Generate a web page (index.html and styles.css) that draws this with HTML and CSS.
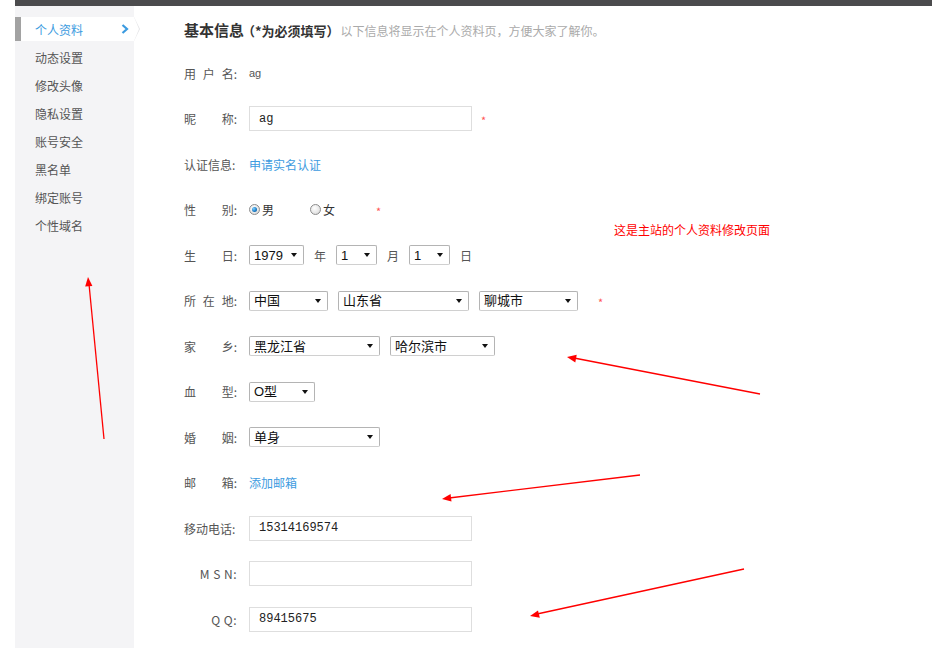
FILE: index.html
```html
<!DOCTYPE html>
<html lang="zh-CN">
<head>
<meta charset="utf-8">
<title>个人资料</title>
<link rel="stylesheet" href="styles.css">
</head>
<body>
<div class="page">
  <div class="topbar"></div>
  <div class="layout">
    <nav class="side">
      <a class="item active">个人资料<svg class="chev" width="8" height="10" viewBox="0 0 8 10"><polyline points="1.5,1 6,5 1.5,9" fill="none" stroke="#3b9be0" stroke-width="2.2"/></svg></a>
      <a class="item">动态设置</a>
      <a class="item">修改头像</a>
      <a class="item">隐私设置</a>
      <a class="item">账号安全</a>
      <a class="item">黑名单</a>
      <a class="item">绑定账号</a>
      <a class="item">个性域名</a>
    </nav>
    <main class="main">
      <h2 class="title">基本信息<span class="req">（*为必须填写）</span><span class="tip">以下信息将显示在个人资料页，方便大家了解你。</span></h2>

      <div class="row"><label class="lbl"><span>用</span><span>户</span><span class="c">名:</span></label><span class="uname">ag</span></div>

      <div class="row"><label class="lbl"><span>昵</span><span class="c">称:</span></label><input class="txt" type="text" value="ag"><span class="star">*</span></div>

      <div class="row"><label class="lbl"><span class="c">认证信息:</span></label><a class="link">申请实名认证</a></div>

      <div class="row"><label class="lbl"><span>性</span><span class="c">别:</span></label>
        <span class="radio on"></span><span class="rtext">男</span>
        <span class="radio female"></span><span class="rtext">女</span>
        <span class="star star-sex">*</span>
      </div>

      <div class="row"><label class="lbl"><span>生</span><span class="c">日:</span></label>
        <span class="sel w-year"><select><option>1979</option></select></span><span class="unit">年</span>
        <span class="sel w-md"><select><option>1</option></select></span><span class="unit">月</span>
        <span class="sel w-md"><select><option>1</option></select></span><span class="unit">日</span>
      </div>

      <div class="row"><label class="lbl"><span>所</span><span>在</span><span class="c">地:</span></label>
        <span class="sel w-country"><select><option>中国</option></select></span>
        <span class="sel w-prov gap"><select><option>山东省</option></select></span>
        <span class="sel w-city gap"><select><option>聊城市</option></select></span>
        <span class="star star-loc">*</span>
      </div>

      <div class="row"><label class="lbl"><span>家</span><span class="c">乡:</span></label>
        <span class="sel w-prov"><select><option>黑龙江省</option></select></span>
        <span class="sel w-hcity gap"><select><option>哈尔滨市</option></select></span>
      </div>

      <div class="row"><label class="lbl"><span>血</span><span class="c">型:</span></label>
        <span class="sel w-blood"><select><option>O型</option></select></span>
      </div>

      <div class="row"><label class="lbl"><span>婚</span><span class="c">姻:</span></label>
        <span class="sel w-prov"><select><option>单身</option></select></span>
      </div>

      <div class="row"><label class="lbl"><span>邮</span><span class="c">箱:</span></label><a class="link">添加邮箱</a></div>

      <div class="row"><label class="lbl"><span class="c">移动电话:</span></label><input class="txt" type="text" value="15314169574"></div>

      <div class="row"><label class="lbl lbl-r"><span class="c">M S N:</span></label><input class="txt" type="text" value=""></div>

      <div class="row"><label class="lbl lbl-r"><span class="c">Q Q:</span></label><input class="txt" type="text" value="89415675"></div>
    </main>
  </div>

  <span class="note">这是主站的个人资料修改页面</span>

  <svg class="arrows" width="932" height="648" viewBox="0 0 932 648">
    <g stroke="#ff0000" stroke-width="1.3" fill="none">
      <line x1="104" y1="439" x2="89" y2="284"/>
      <line x1="760" y1="394" x2="574" y2="358"/>
      <line x1="640" y1="475" x2="449" y2="498"/>
      <line x1="744" y1="569" x2="537" y2="614"/>
    </g>
    <g fill="#ff0000">
      <polygon points="88,277 92.4,286 85.2,286.6"/>
      <polygon points="567,357 576.7,354.8 575.3,362.4"/>
      <polygon points="442,499 450.6,494 451.5,501.6"/>
      <polygon points="530,616 538,610.4 539.8,617.8"/>
    </g>
  </svg>
</div>
</body>
</html>
```
FILE: styles.css
```css
html, body {
  margin: 0;
  padding: 0;
  background: #fff;
}

.page {
  position: relative;
  width: 932px;
  height: 648px;
  overflow: hidden;
  padding-left: 15px;
  box-sizing: border-box;
  font-family: "Noto Sans CJK SC", "Liberation Sans", sans-serif;
  font-size: 12px;
  color: #555;
}

.topbar {
  height: 6px;
  background: #4b4b4d;
}

.layout {
  display: flex;
  height: 642px;
}

/* sidebar */
.side {
  width: 119px;
  flex: none;
  background: #f4f4f6;
  padding-top: 11px;
  box-sizing: border-box;
}

.item {
  position: relative;
  display: flex;
  align-items: center;
  height: 24px;
  margin-bottom: 4px;
  padding-left: 20px;
  font-size: 12px;
  color: #555;
  cursor: pointer;
}

.item.active {
  background: #fff;
  color: #3b9be0;
  box-shadow: inset 6px 0 0 #a2a2a2;
}

.item.active::before {
  content: "";
  position: absolute;
  right: -6px;
  top: 0;
  border-left: 6px solid #e4e4e6;
  border-top: 12px solid transparent;
  border-bottom: 12px solid transparent;
}

.item.active::after {
  content: "";
  position: absolute;
  right: -5px;
  top: 0;
  border-left: 5px solid #fff;
  border-top: 12px solid transparent;
  border-bottom: 12px solid transparent;
}

.chev {
  margin-left: auto;
  margin-right: 5px;
}

/* main */
.main {
  flex: 1;
  padding-left: 50px;
}

.title {
  margin: 0 0 8.25px;
  padding-top: 12px;
  height: 24px;
  line-height: 24px;
  font-size: 15px;
  font-weight: bold;
  color: #333;
  white-space: nowrap;
}

.req {
  font-size: 13px;
  font-weight: bold;
  color: #333;
  margin-left: -2px;
}

.tip {
  font-size: 12px;
  font-weight: normal;
  color: #aaa;
  margin-left: 1px;
}

.row {
  height: 45.5px;
  display: flex;
  align-items: center;
  white-space: nowrap;
}

.lbl {
  width: 54px;
  margin-right: 11px;
  display: flex;
  justify-content: space-between;
  color: #555;
  flex: none;
}

.lbl-r {
  justify-content: flex-end;
  letter-spacing: 0.5px;
}

.lbl .c {
  padding-right: 1px;
}

.uname {
  font-family: "Liberation Sans", sans-serif;
  font-size: 11px;
  color: #555;
}

.txt {
  width: 223px;
  height: 25px;
  box-sizing: border-box;
  border: 1px solid #dedede;
  padding: 0 9px;
  margin: 0;
  font-family: "Liberation Mono", monospace;
  font-size: 12px;
  color: #222;
  outline: none;
  background: #fff;
}

.star {
  color: #f55;
  font-size: 11px;
  margin-left: 9px;
  position: relative;
  top: 1px;
}

.star-sex {
  margin-left: 41px;
}

.star-loc {
  margin-left: 20px;
}

.link {
  color: #3d9be0;
  cursor: pointer;
}

/* radios */
.radio {
  position: relative;
  width: 11px;
  height: 11px;
  box-sizing: border-box;
  border-radius: 50%;
  border: 1px solid #8c8c8c;
  background: radial-gradient(circle at 40% 35%, #fff 0%, #e6e6e6 60%, #c9c9c9 100%);
  flex: none;
}

.radio.on::after {
  content: "";
  position: absolute;
  left: 2px;
  top: 2px;
  width: 5px;
  height: 5px;
  border-radius: 50%;
  background: radial-gradient(circle at 35% 35%, #7fd0ff 0%, #1f7fc8 55%, #0b4f8c 100%);
}

.radio.female {
  margin-left: 36px;
}

.rtext {
  margin-left: 2px;
  color: #333;
}

/* selects */
.sel {
  position: relative;
  display: inline-block;
  height: 20px;
  flex: none;
}

.sel select {
  appearance: none;
  -webkit-appearance: none;
  width: 100%;
  height: 20px;
  box-sizing: border-box;
  margin: 0;
  padding: 0 0 0 4px;
  border: 1px solid #b4b4b4;
  border-bottom-color: #d0d0d0;
  border-radius: 2px;
  background: #fff;
  font-family: "Liberation Sans", "Noto Sans CJK SC", sans-serif;
  font-size: 13px;
  color: #111;
  outline: none;
}

.sel::after {
  content: "";
  position: absolute;
  right: 7px;
  top: 8px;
  border-top: 4px solid #111;
  border-left: 3.5px solid transparent;
  border-right: 3.5px solid transparent;
  pointer-events: none;
}

.gap {
  margin-left: 10px;
}

.unit {
  margin: 0 10px;
  color: #555;
}

.w-year { width: 55px; }
.w-md { width: 41px; }
.w-country { width: 79px; }
.w-prov { width: 131px; }
.w-city { width: 99px; }
.w-hcity { width: 105px; }
.w-blood { width: 66px; }

/* annotations */
.note {
  position: absolute;
  left: 614px;
  top: 221px;
  font-size: 12px;
  color: #ff0000;
  white-space: nowrap;
}

.arrows {
  position: absolute;
  left: 0;
  top: 0;
  pointer-events: none;
}
```
